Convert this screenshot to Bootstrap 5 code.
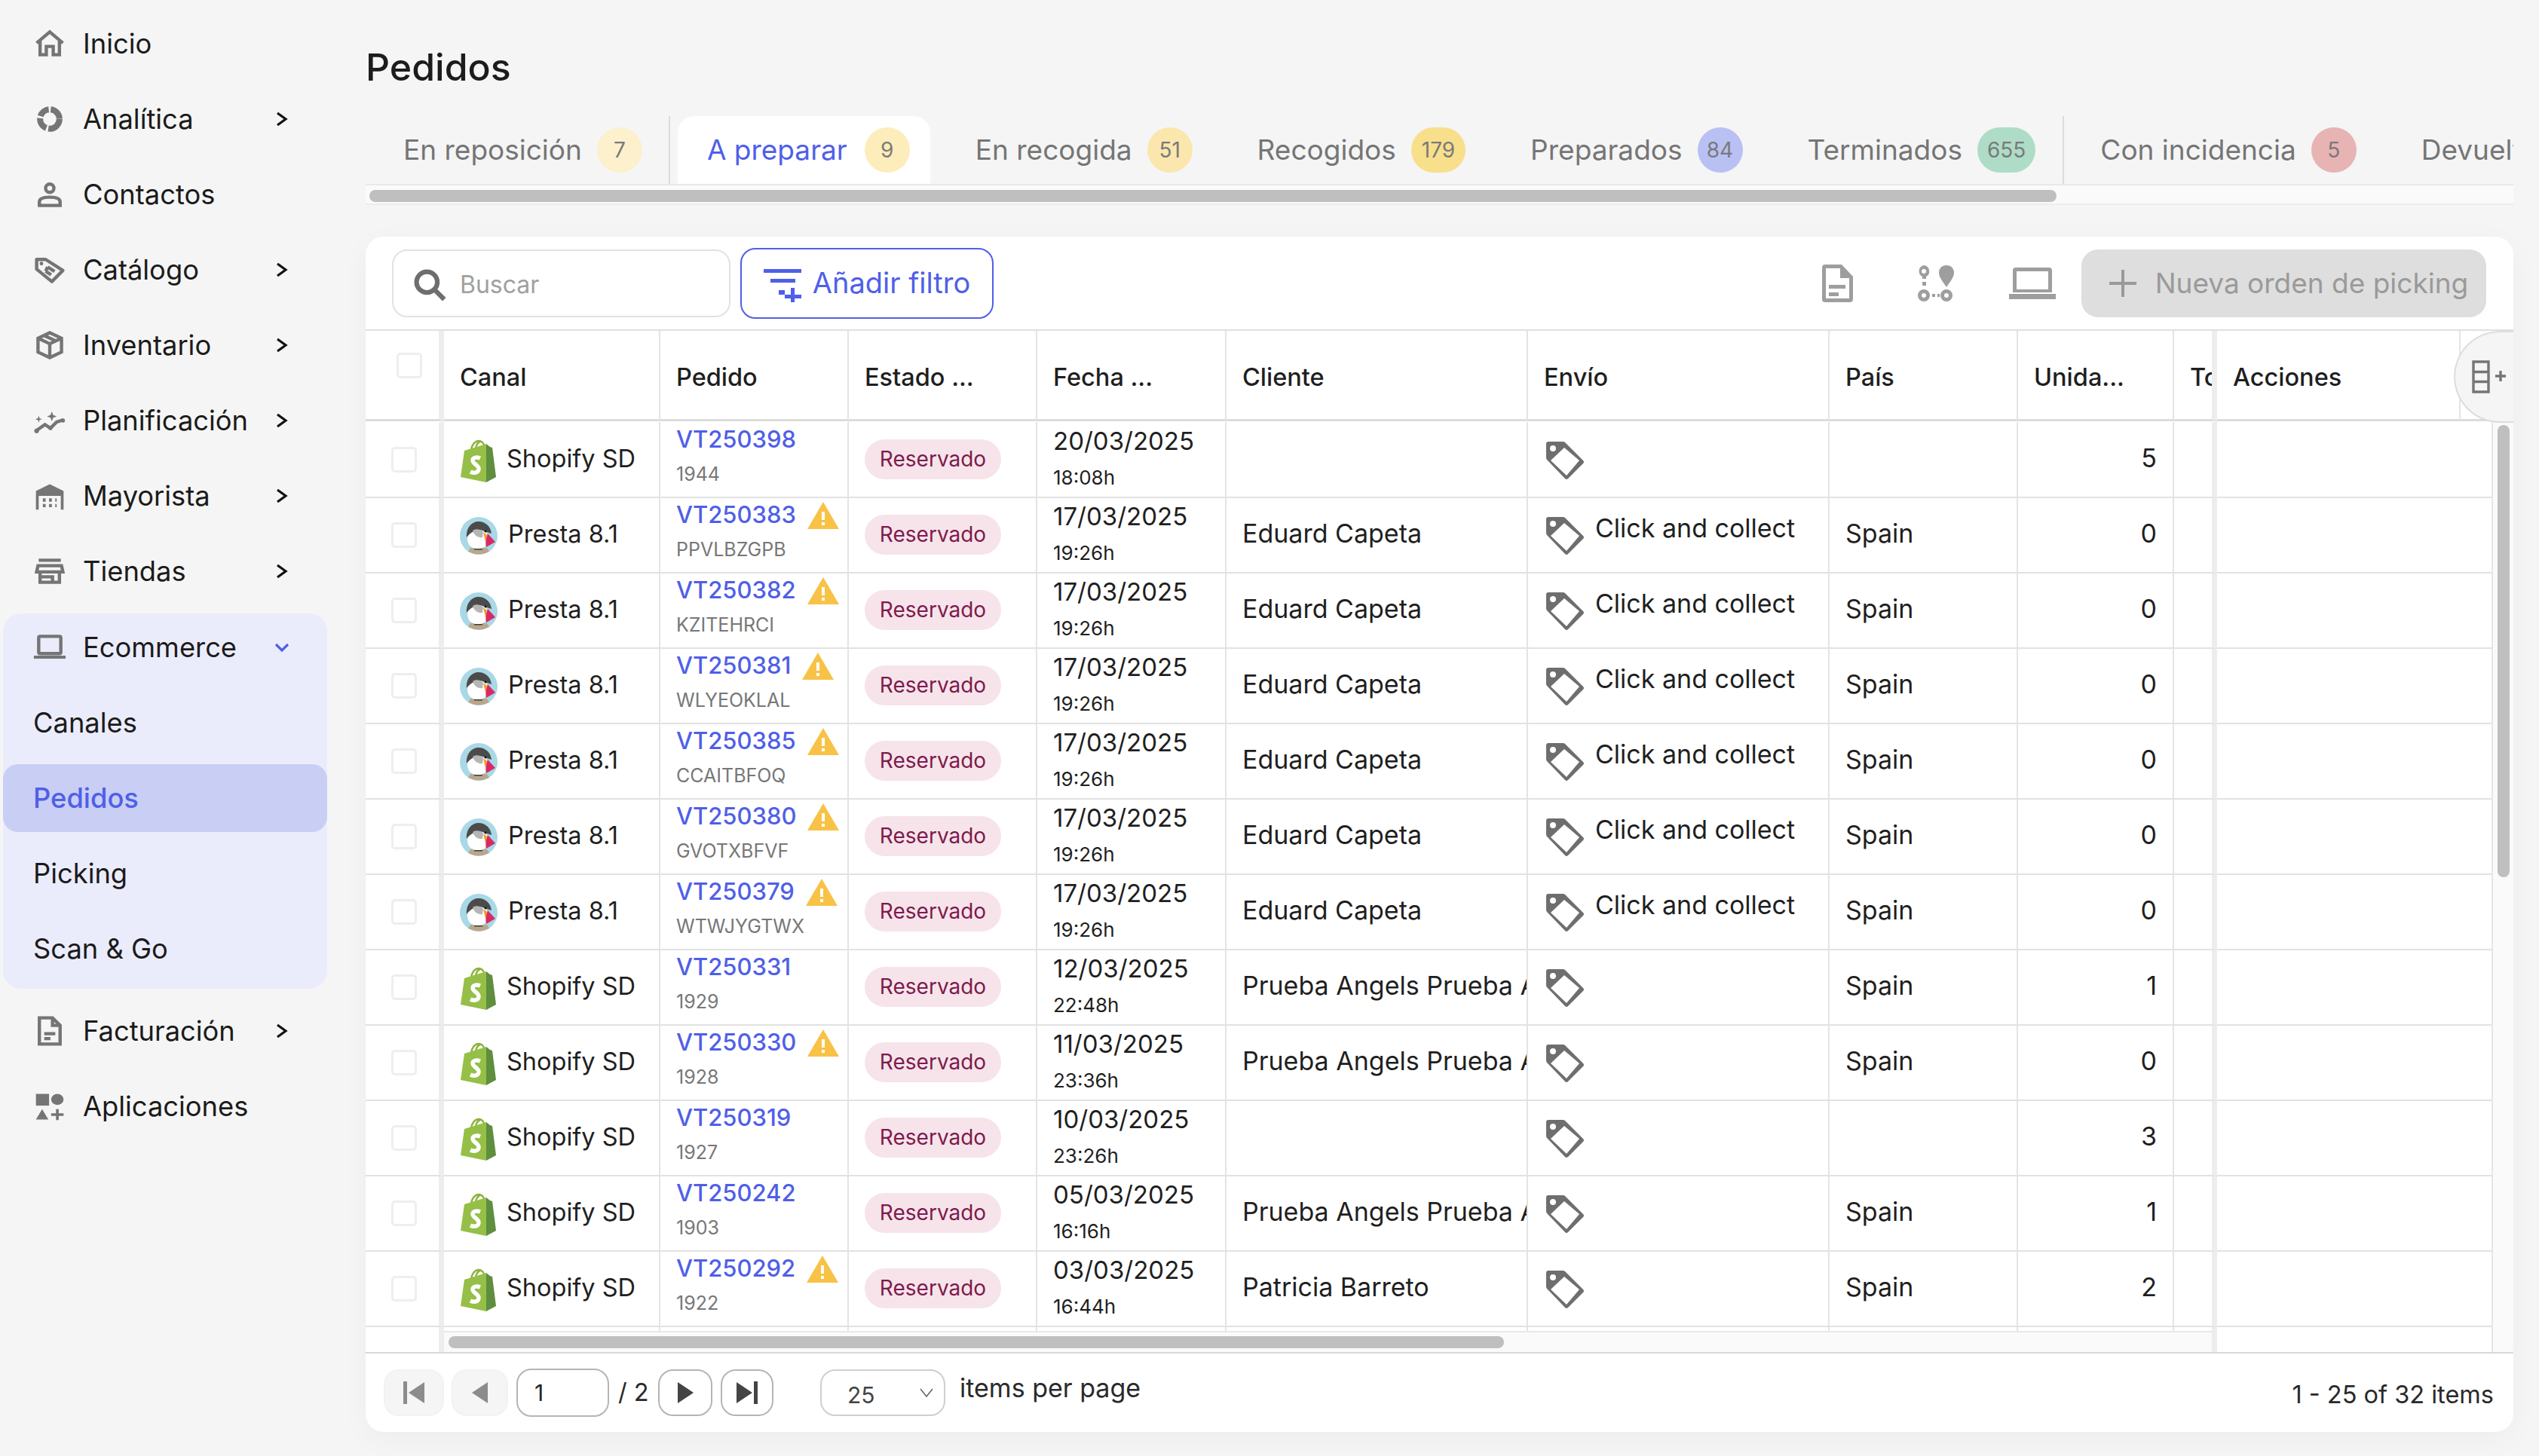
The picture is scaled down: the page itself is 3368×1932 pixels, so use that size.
<!DOCTYPE html>
<html lang="es">
<head>
<meta charset="utf-8">
<title>Pedidos</title>
<link href="https://cdn.jsdelivr.net/npm/bootstrap@5.3.0/dist/css/bootstrap.min.css" rel="stylesheet">
<style>
html,body{height:100%;}
body{background:#f5f5f5;font-family:Inter,"Liberation Sans",sans-serif;color:#1f1f1f;overflow:hidden;font-size:34px;}
.app-shell{height:1932px;}
.side-col{width:485px;flex:none;padding:13px 0 0 4px;}
.side-col .nav-row{width:430px;height:90px;padding-left:40px;margin-bottom:10px;font-size:36.3px;line-height:1;color:#1b1b1b;text-decoration:none;}
.nav-ico{width:44px;height:44px;flex:none;margin-right:22px;fill:none;stroke:#757575;stroke-width:2.4;}
.nav-ico .solid{fill:#757575;stroke:none;}
.nav-chev{width:16px;height:22px;margin-left:auto;margin-right:52px;fill:none;stroke:#111;stroke-width:3.2;}
.nav-group{width:430px;height:498px;margin:1px 0 11px;background:#ebecfb;border-radius:24px;}
.nav-group .nav-row{margin-bottom:10px;}
.nav-group .sub-row{padding-left:40px;}
.nav-group .chev-down{width:22px;height:16px;margin-right:49px;stroke:#4f5fe8;}
.nav-group .is-current{background:#c9cef5;color:#4f5fe8;border-radius:20px;font-weight:500;}
.main-col{min-width:0;padding-right:34px;}
.page-title{height:154px;margin:0;padding-top:61px;font-size:50px;line-height:56px;font-weight:500;color:#1c1c1c;}
.tab-strip{height:90px;gap:21px;padding-left:11px;overflow:hidden;}
.tab-item{height:90px;flex:none;padding:0 26px 0 39px;gap:20px;font-size:37px;color:#757575;border-radius:22px 22px 0 0;text-decoration:none;white-space:nowrap;}
.tab-item.is-active{background:#fff;color:#4f5fe8;gap:23px;padding-right:27px;}
.tab-split{width:2px;height:90px;flex:none;margin:0 -11.5px;background:#dcdcdc;}
.tab-count{min-width:60px;height:60px;padding:0 10px;border-radius:30px;font-size:28px;color:#7a7a7a;}
.count-a{background:#fcf0cd;}.count-b{background:#fdedbb;}.count-c{background:#fbe7ad;}.count-d{background:#f8df8b;padding:0 14px;}
.count-e{background:#b9c0f3;}.count-f{background:#aedcc6;padding:0 13px;}.count-g{background:#e8b3b3;}
.hbar-track{background:#fafafa;border-top:2px solid #e8e8e8;border-bottom:2px solid #ececec;}
.tabs-track{height:28px;padding:6px 0 0 5px;margin-bottom:42px;}
.hbar-thumb{height:16px;background:#bfbfbf;border-radius:8px;}
.tabs-thumb{width:2238px;}
.data-card{height:1586px;background:#fff;border:0;border-radius:24px;overflow:hidden;box-shadow:0 10px 40px rgba(0,0,0,.035);}
.tool-bar{height:125px;padding:0 36px 0 35px;border-bottom:2px solid #e0e0e0;}
.search-box{width:449px;height:90px;}
.search-box .form-control{height:90px;padding:3px 0 0 88px;border:2px solid #e2e2e2;border-radius:20px;font-size:32px;box-shadow:none;}
.search-box .form-control::placeholder{color:#a0a0a0;}
.search-ico{position:absolute;left:28px;top:25px;width:44px;height:44px;fill:none;stroke:#6e6e6e;stroke-width:3.4;}
.filter-btn{width:336px;height:94px;margin-left:13px;border:2px solid #4f5fe8;border-radius:20px;color:#4f5fe8;background:#fff;font-size:38px;gap:13px;padding:0;}
.filter-btn svg{width:52px;height:44px;margin-top:6px;fill:#4f5fe8;}
.tool-ico{fill:#9e9e9e;stroke:none;}
.tool-route{margin-left:84px;}
.tool-laptop{margin-left:72px;}
.new-btn,.new-btn:disabled{width:537px;height:90px;margin-left:34px;background:#dedede;border:0;border-radius:22px;color:#9a9a9a;font-size:37px;gap:24px;padding:0 0 0 12px;opacity:1;white-space:nowrap;}
.new-btn svg{width:38px;height:38px;stroke:#9a9a9a;stroke-width:4;}
.table-zone{height:1355px;overflow:hidden;}
.order-table{table-layout:fixed;width:2849px;margin:0;border-collapse:separate;border-spacing:0;--bs-table-bg:#fff;}
.order-table > * > tr > th,.order-table > * > tr > td{padding:0 0 0 21px;border-right:2px solid #e4e4e4;border-bottom:2px solid #e2e2e2;white-space:nowrap;overflow:hidden;vertical-align:top;color:#1f1f1f;box-shadow:none;}
.order-table > thead > tr > th{height:120px;font-size:32.5px;font-weight:500;vertical-align:middle;border-bottom:3px solid #dcdcdc;padding-top:8px;}
.order-table > tbody > tr > td{height:100px;font-size:34px;line-height:1;}
.order-table > tbody > tr:first-child > td{height:102px;border-top:2px solid #fff;}
.order-table > * > tr > .sel-col{padding-left:34px;border-right:7px solid #ededed;vertical-align:middle;}
.order-table > thead > tr > .sel-col{padding:0 0 26px 41px;}
.order-table > * > tr > .end-col{border-right:7px solid #ededed;}
.order-table > * > tr > .act-col{border-right:0;}
.order-table > tbody > tr > .blank-col{border-right:0;}
.order-table > * > tr > .num-col{text-align:right;padding-right:21px;padding-bottom:4px;vertical-align:middle;}
.order-table > tbody > tr > .mid-col{vertical-align:middle;padding-bottom:4px;}
.order-table > tbody > tr > .pill-col{vertical-align:middle;padding-bottom:2px;}
.pick-box.form-check-input{width:34px;height:34px;margin:0;float:none;display:block;border:3px solid #eeeeee;border-radius:5px;box-shadow:none;}
.chan-wrap{gap:14px;height:96px;font-size:32.5px;}
.chan-shop{width:48px;height:57px;flex:none;margin-top:4px;}
.chan-presta{width:50px;height:50px;flex:none;margin-top:4px;}
.ord-top{height:45px;gap:15px;line-height:43px;}
.ord-link{color:#4f5fe8;font-size:31px;font-weight:500;text-decoration:none;}
.ord-warn{width:42px;height:36px;flex:none;margin-top:5px;}
.ord-sub{height:47px;line-height:47px;font-size:25px;color:#777;}
.res-pill{display:inline-block;width:181px;height:53px;padding:0;line-height:53px;background:#f6e4ea;color:#7e1a4e;font-size:28px;font-weight:400;}
.date-top{height:49px;line-height:49px;font-size:33px;}
.time-sub{height:47px;line-height:47px;font-size:26px;}
.ship-wrap{height:98px;padding-left:3px;}
.ship-tag{width:51px;height:51px;flex:none;margin-top:25px;fill:#6e6e6e;}
.ship-text{margin:21px 0 0 14px;line-height:38px;}
.columns-btn{position:absolute;right:0;top:0;width:79px;height:122px;background:#f5f5f5;border:2px solid #dcdcdc;border-right:0;border-radius:61px 0 0 61px;padding:0 6px 0 22px;}
.columns-btn svg{width:46px;height:44px;display:block;fill:none;stroke:#757575;stroke-width:3.4;}
.vbar-track{position:absolute;right:0;top:122px;bottom:0;width:29px;padding:3px 0 0 6px;background:#fafafa;border-left:2px solid #e6e6e6;}
.vbar-thumb{width:16px;height:600px;background:#bfbfbf;border-radius:8px;}
.bottom-bar{position:absolute;left:104px;width:2345px;top:1327px;height:28px;padding:5px 0 0 6px;border-bottom:0;}
.bottom-thumb{width:1400px;}
.pager-bar{height:106px;padding:0 26px 0 24px;border-top:2px solid #d8d8d8;font-size:32.5px;color:#2a2a2a;}
.pg-btn{height:62px;padding:0;border:2px solid #b5b5b5;border-radius:20px;background:#fff;}
.pg-btn svg{width:36px;height:36px;fill:#444;}
.pg-btn.is-off{background:#f5f5f5;border-color:#f2f2f2;}
.pg-btn.is-off svg{fill:#8c8c8c;}
.pg-first{width:80px;}.pg-prev{width:75px;margin-left:10px;}.pg-next{width:72px;margin-left:11px;}.pg-last{width:70px;margin-left:11px;}
.pg-input{width:123px;height:64px;margin-left:11px;padding:0 0 0 22px;border:2px solid #b5b5b5;border-radius:20px;font-size:30px;box-shadow:none;}
.pg-total{width:42px;margin-left:12px;white-space:nowrap;}
.pg-size{width:166px;height:62px;margin-left:62px;padding:6px 0 0 34px;border:2px solid #cfcfcf;border-radius:20px;font-size:30px;color:#444;box-shadow:none;background-position:right 12px center;background-size:22px 16px;background-image:url("data:image/svg+xml,%3csvg xmlns='http://www.w3.org/2000/svg' viewBox='0 0 22 16'%3e%3cpath fill='none' stroke='%23666' stroke-width='1.6' d='M3 3l8 10 8-10'/%3e%3c/svg%3e");}
.pg-label{margin-left:19px;margin-top:-14px;white-space:nowrap;font-size:34px;}
.pg-range{margin-top:6px;white-space:nowrap;}
</style>
</head>
<body>
<svg width="0" height="0" class="position-absolute">
  <defs>
    <symbol id="i-shop" viewBox="0 0 48 57">
      <path fill="none" stroke="#8db33f" stroke-width="2.4" d="M15 14c1-7 5-12 10-12 5 0 8 5 8 10M21 11c1-4 3-7 6-8"/>
      <path fill="#95bf47" d="M1 50 6 15l29-9v51z"/>
      <path fill="#5e8e3e" d="M35 6l5 4 3 1 5 39-13 7z"/>
      <path fill="none" stroke="#fff" stroke-width="5.4" d="M27 25c-5-2-10-1-10 3 0 5 9 6 8 12-1 5-7 5-11 3"/>
    </symbol>
    <symbol id="i-presta" viewBox="0 0 50 50">
      <circle cx="25" cy="25" r="25" fill="#a9d8e6"/>
      <path fill="#b9a78c" d="M14 41h22l3 5q-14 7-28 0z"/>
      <path fill="#fff" d="M10 28C10 14 40 14 38 30c-2 11-10 13-17 12-7-1-11-6-11-14z"/>
      <path fill="#4b4b4b" d="M9 27C8 14 16 6 25 6c8 0 16 6 17 16l-9-3C26 15 16 18 9 27z"/>
      <path fill="#b5b5b5" d="M17 18c4-3 11-2 14 2l-1 7c-5 1-11-2-13-9z"/>
      <path fill="#f39c1f" d="M31 20l5 4-2 9z"/>
      <path fill="#d92b63" d="M37 22l10 11-12 7q-2-8 2-18z"/>
      <path fill="#3a3a3a" d="M19 42h11v1.500H19z"/>
      <circle cx="34" cy="19" r="1.400" fill="#111"/>
    </symbol>
    <symbol id="i-warn" viewBox="0 0 42 36">
      <path fill="#f8c246" d="M21 0 42 36H0z"/>
      <path fill="#fff" d="M19 13h4v11h-4zM19 27h4v4h-4z"/>
    </symbol>
    <symbol id="i-tag" viewBox="0 0 51 51">
      <path fill-rule="evenodd" d="M3 0h19q2 0 3 1l24 24q2 2 0 4L29 49q-2 2-4 0L1 24q-1-1-1-3V3q0-3 3-3zm21 8L6 25l21 20 17-20zM9 5a4 4 0 1 0 0 8 4 4 0 0 0 0-8z"/>
    </symbol>
    <symbol id="i-right" viewBox="0 0 16 22"><path d="M2 3l11 8-11 8"/></symbol>
  </defs>
</svg>

<div class="app-shell d-flex">
  <nav class="side-col d-flex flex-column">
    <a class="nav-row d-flex align-items-center" href="#"><svg class="nav-ico" viewBox="0 0 24 24"><path d="M2.500 11.500 12 3.500l9.500 8M5 9.500V20h4.500v-6h5v6H19V9.500"/></svg>Inicio</a>
    <a class="nav-row d-flex align-items-center" href="#"><svg class="nav-ico" viewBox="0 0 24 24"><circle cx="12" cy="12" r="7" stroke-width="4.400" stroke-dasharray="12 1.500 9 1.500 8 1.500 10 1.500"/></svg>Analítica<svg class="nav-chev"><use href="#i-right"/></svg></a>
    <a class="nav-row d-flex align-items-center" href="#"><svg class="nav-ico" viewBox="0 0 24 24"><circle cx="12" cy="7.500" r="3"/><path d="M4.500 20v-2.500c0-2.500 3.500-3.500 7.500-3.500s7.500 1 7.500 3.500V20z"/></svg>Contactos</a>
    <a class="nav-row d-flex align-items-center" href="#"><svg class="nav-ico" viewBox="0 0 24 24"><path d="M2.500 4.500h6.500l12.500 8-8 8-11-9z" stroke-linejoin="round"/><circle class="solid" cx="6" cy="7.500" r="1.300"/><path d="M10.500 10l5 3.200M9 13l4 2.600M10.500 10 9 13"/></svg>Catálogo<svg class="nav-chev"><use href="#i-right"/></svg></a>
    <a class="nav-row d-flex align-items-center" href="#"><svg class="nav-ico" viewBox="0 0 24 24"><path d="M12 3 3.500 7v10l8.500 4 8.500-4V7zM3.500 7l8.500 4 8.500-4M12 11v10M8 5l8.500 4"/></svg>Inventario<svg class="nav-chev"><use href="#i-right"/></svg></a>
    <a class="nav-row d-flex align-items-center" href="#"><svg class="nav-ico" viewBox="0 0 24 24"><path d="M2 19.500 8.500 15l4 2.500 4.500-4.500 5-1.500"/><circle class="solid" cx="2.500" cy="19.500" r="1.700"/><circle class="solid" cx="12.500" cy="17.500" r="1.500"/><circle class="solid" cx="21.500" cy="12" r="1.500"/><path class="solid" d="M13.500 5.500l1 2.500 2.500 1-2.500 1-1 2.500-1-2.500-2.500-1 2.500-1zM4 8.500l.6 1.900 1.900.6-1.900.6L4 13.500l-.6-1.900L1.500 11l1.900-.6z"/></svg>Planificación<svg class="nav-chev"><use href="#i-right"/></svg></a>
    <a class="nav-row d-flex align-items-center" href="#"><svg class="nav-ico" viewBox="0 0 24 24"><path class="solid" d="M2 22V8.500L12 3.500l10 5V22h-2V12H4v10zM5 9.500h14v1H5z"/><path d="M7 15h10M7 19h10" stroke-dasharray="2 2.500"/></svg>Mayorista<svg class="nav-chev"><use href="#i-right"/></svg></a>
    <a class="nav-row d-flex align-items-center" href="#"><svg class="nav-ico" viewBox="0 0 24 24"><path d="M4 4h16M3.500 8h17l1 4.500h-19zM5 12.500V20h14v-7.500M5 16h9v4"/></svg>Tiendas<svg class="nav-chev"><use href="#i-right"/></svg></a>
    <div class="nav-group">
      <a class="nav-row d-flex align-items-center" href="#"><svg class="nav-ico" viewBox="0 0 24 24"><rect x="4" y="4" width="16" height="12.500" rx="1"/><rect class="solid" x="0.500" y="18" width="23" height="2.200"/></svg>Ecommerce<svg class="nav-chev chev-down" viewBox="0 0 22 16"><path d="M3 4l8 8 8-8"/></svg></a>
      <a class="nav-row sub-row d-flex align-items-center" href="#">Canales</a>
      <a class="nav-row sub-row is-current d-flex align-items-center" href="#">Pedidos</a>
      <a class="nav-row sub-row d-flex align-items-center" href="#">Picking</a>
      <a class="nav-row sub-row d-flex align-items-center" href="#">Scan &amp; Go</a>
    </div>
    <a class="nav-row d-flex align-items-center" href="#"><svg class="nav-ico" viewBox="0 0 24 24"><path d="M4.500 2.500h9.500l5.500 5.500v13.500h-15zM14 2.500V8h5.500M8 14h8M8 17.500h4.500"/></svg>Facturación<svg class="nav-chev"><use href="#i-right"/></svg></a>
    <a class="nav-row d-flex align-items-center" href="#"><svg class="nav-ico" viewBox="0 0 24 24"><g class="solid"><rect x="2" y="3" width="9.500" height="8.500"/><ellipse cx="17.500" cy="7" rx="4.500" ry="4"/><path d="M6.500 14 11 21.500H2z"/><path d="M16.500 14h2v3h3.500v2h-3.500v3h-2v-3H13v-2h3.500z"/></g></svg>Aplicaciones</a>
  </nav>

  <main class="main-col flex-grow-1 d-flex flex-column">
    <h1 class="page-title">Pedidos</h1>
    <div class="tab-strip d-flex align-items-stretch">
      <a class="tab-item d-flex align-items-center" href="#">En reposición<span class="tab-count count-a d-flex align-items-center justify-content-center">7</span></a>
      <span class="tab-split"></span>
      <a class="tab-item is-active d-flex align-items-center" href="#">A preparar<span class="tab-count count-b d-flex align-items-center justify-content-center">9</span></a>
      <a class="tab-item d-flex align-items-center" href="#">En recogida<span class="tab-count count-c d-flex align-items-center justify-content-center">51</span></a>
      <a class="tab-item d-flex align-items-center" href="#">Recogidos<span class="tab-count count-d d-flex align-items-center justify-content-center">179</span></a>
      <a class="tab-item d-flex align-items-center" href="#">Preparados<span class="tab-count count-e d-flex align-items-center justify-content-center">84</span></a>
      <a class="tab-item d-flex align-items-center" href="#">Terminados<span class="tab-count count-f d-flex align-items-center justify-content-center">655</span></a>
      <span class="tab-split"></span>
      <a class="tab-item d-flex align-items-center" href="#">Con incidencia<span class="tab-count count-g d-flex align-items-center justify-content-center">5</span></a>
      <a class="tab-item d-flex align-items-center" href="#">Devueltos</a>
    </div>
    <div class="hbar-track tabs-track"><div class="hbar-thumb tabs-thumb"></div></div>

    <section class="card data-card">
      <div class="tool-bar d-flex align-items-center">
        <div class="search-box position-relative">
          <svg class="search-ico" viewBox="0 0 24 24"><circle cx="10" cy="10" r="7.500"/><path d="M15.500 15.500 22.500 22.500"/></svg>
          <input class="form-control" type="text" placeholder="Buscar">
        </div>
        <button class="btn filter-btn d-flex align-items-center justify-content-center" type="button">
          <svg viewBox="0 0 52 44"><path d="M0 0h50v5H0zM9 13h33v5H9zM20 28h8v6h-8zM36 25h5v9h9v5h-9v5h-5v-5h-8v-5h8z"/></svg>Añadir filtro
        </button>
        <div class="ms-auto d-flex align-items-center">
          <svg class="tool-ico" width="42" height="52" viewBox="0 0 42 52"><path fill-rule="evenodd" d="M4 1h22l15 16v30a4 4 0 0 1-4 4H4a4 4 0 0 1-4-4V5a4 4 0 0 1 4-4zm1 5v40h31V19H24V6zM9 28h22v5H9zM9 38h13v5H9z"/></svg>
          <svg class="tool-ico tool-route" width="50" height="50" viewBox="0 0 50 50"><path fill-rule="evenodd" d="M9 1a8 8 0 0 1 3 15v3H7v-3A8 8 0 0 1 9 1zm0 5a3 3 0 1 0 0 6 3 3 0 0 0 0-6zM39 1c6 0 10 4 10 10 0 6-6 13-10 19-4-6-10-13-10-19C29 5 33 1 39 1zM7 23h5v5H7zM9 33a8 8 0 1 1 0 16 8 8 0 0 1 0-16zm0 5a3 3 0 1 0 0 6 3 3 0 0 0 0-6zM39 33a8 8 0 1 1 0 16 8 8 0 0 1 0-16zm0 5a3 3 0 1 0 0 6 3 3 0 0 0 0-6zM20 39h4v4h-4zM27 39h3v4h-3z"/></svg>
          <svg class="tool-ico tool-laptop" width="62" height="42" viewBox="0 0 62 42"><path fill-rule="evenodd" d="M9 0h44a4 4 0 0 1 4 4v29H5V4a4 4 0 0 1 4-4zm1 5v24h42V5zM0 35h62v7H0z"/></svg>
          <button class="btn new-btn d-flex align-items-center justify-content-center" type="button" disabled>
            <svg viewBox="0 0 38 38"><path d="M19 1v36M1 19h36"/></svg>Nueva orden de picking
          </button>
        </div>
      </div>

      <div class="table-zone position-relative">
        <table class="table order-table">
          <colgroup><col style="width:104px"><col style="width:287px"><col style="width:250px"><col style="width:250px"><col style="width:251px"><col style="width:400px"><col style="width:400px"><col style="width:250px"><col style="width:207px"><col style="width:57px"><col style="width:323px"><col style="width:70px"></colgroup>
          <thead>
            <tr>
              <th class="sel-col"><input class="form-check-input pick-box" type="checkbox"></th>
              <th>Canal</th><th>Pedido</th><th>Estado ...</th><th>Fecha ...</th><th>Cliente</th><th>Envío</th><th>País</th><th>Unida...</th><th class="end-col">Total</th><th>Acciones</th><th class="act-col"></th>
            </tr>
          </thead>
          <tbody>
            <tr><td class="sel-col"><input class="form-check-input pick-box" type="checkbox"></td><td><div class="chan-wrap d-flex align-items-center"><svg class="chan-shop"><use href="#i-shop"/></svg>Shopify SD</div></td><td><div class="ord-top d-flex"><a class="ord-link" href="#">VT250398</a></div><div class="ord-sub">1944</div></td><td class="pill-col"><span class="badge rounded-pill res-pill">Reservado</span></td><td><div class="date-top">20/03/2025</div><div class="time-sub">18:08h</div></td><td class="mid-col"></td><td><div class="ship-wrap d-flex"><svg class="ship-tag"><use href="#i-tag"/></svg></div></td><td class="mid-col"></td><td class="num-col">5</td><td class="end-col"></td><td class="blank-col"></td><td class="act-col"></td></tr>
            <tr><td class="sel-col"><input class="form-check-input pick-box" type="checkbox"></td><td><div class="chan-wrap d-flex align-items-center"><svg class="chan-presta"><use href="#i-presta"/></svg>Presta 8.1</div></td><td><div class="ord-top d-flex"><a class="ord-link" href="#">VT250383</a><svg class="ord-warn"><use href="#i-warn"/></svg></div><div class="ord-sub">PPVLBZGPB</div></td><td class="pill-col"><span class="badge rounded-pill res-pill">Reservado</span></td><td><div class="date-top">17/03/2025</div><div class="time-sub">19:26h</div></td><td class="mid-col">Eduard Capeta</td><td><div class="ship-wrap d-flex"><svg class="ship-tag"><use href="#i-tag"/></svg><span class="ship-text">Click and collect</span></div></td><td class="mid-col">Spain</td><td class="num-col">0</td><td class="end-col"></td><td class="blank-col"></td><td class="act-col"></td></tr>
            <tr><td class="sel-col"><input class="form-check-input pick-box" type="checkbox"></td><td><div class="chan-wrap d-flex align-items-center"><svg class="chan-presta"><use href="#i-presta"/></svg>Presta 8.1</div></td><td><div class="ord-top d-flex"><a class="ord-link" href="#">VT250382</a><svg class="ord-warn"><use href="#i-warn"/></svg></div><div class="ord-sub">KZITEHRCI</div></td><td class="pill-col"><span class="badge rounded-pill res-pill">Reservado</span></td><td><div class="date-top">17/03/2025</div><div class="time-sub">19:26h</div></td><td class="mid-col">Eduard Capeta</td><td><div class="ship-wrap d-flex"><svg class="ship-tag"><use href="#i-tag"/></svg><span class="ship-text">Click and collect</span></div></td><td class="mid-col">Spain</td><td class="num-col">0</td><td class="end-col"></td><td class="blank-col"></td><td class="act-col"></td></tr>
            <tr><td class="sel-col"><input class="form-check-input pick-box" type="checkbox"></td><td><div class="chan-wrap d-flex align-items-center"><svg class="chan-presta"><use href="#i-presta"/></svg>Presta 8.1</div></td><td><div class="ord-top d-flex"><a class="ord-link" href="#">VT250381</a><svg class="ord-warn"><use href="#i-warn"/></svg></div><div class="ord-sub">WLYEOKLAL</div></td><td class="pill-col"><span class="badge rounded-pill res-pill">Reservado</span></td><td><div class="date-top">17/03/2025</div><div class="time-sub">19:26h</div></td><td class="mid-col">Eduard Capeta</td><td><div class="ship-wrap d-flex"><svg class="ship-tag"><use href="#i-tag"/></svg><span class="ship-text">Click and collect</span></div></td><td class="mid-col">Spain</td><td class="num-col">0</td><td class="end-col"></td><td class="blank-col"></td><td class="act-col"></td></tr>
            <tr><td class="sel-col"><input class="form-check-input pick-box" type="checkbox"></td><td><div class="chan-wrap d-flex align-items-center"><svg class="chan-presta"><use href="#i-presta"/></svg>Presta 8.1</div></td><td><div class="ord-top d-flex"><a class="ord-link" href="#">VT250385</a><svg class="ord-warn"><use href="#i-warn"/></svg></div><div class="ord-sub">CCAITBFOQ</div></td><td class="pill-col"><span class="badge rounded-pill res-pill">Reservado</span></td><td><div class="date-top">17/03/2025</div><div class="time-sub">19:26h</div></td><td class="mid-col">Eduard Capeta</td><td><div class="ship-wrap d-flex"><svg class="ship-tag"><use href="#i-tag"/></svg><span class="ship-text">Click and collect</span></div></td><td class="mid-col">Spain</td><td class="num-col">0</td><td class="end-col"></td><td class="blank-col"></td><td class="act-col"></td></tr>
            <tr><td class="sel-col"><input class="form-check-input pick-box" type="checkbox"></td><td><div class="chan-wrap d-flex align-items-center"><svg class="chan-presta"><use href="#i-presta"/></svg>Presta 8.1</div></td><td><div class="ord-top d-flex"><a class="ord-link" href="#">VT250380</a><svg class="ord-warn"><use href="#i-warn"/></svg></div><div class="ord-sub">GVOTXBFVF</div></td><td class="pill-col"><span class="badge rounded-pill res-pill">Reservado</span></td><td><div class="date-top">17/03/2025</div><div class="time-sub">19:26h</div></td><td class="mid-col">Eduard Capeta</td><td><div class="ship-wrap d-flex"><svg class="ship-tag"><use href="#i-tag"/></svg><span class="ship-text">Click and collect</span></div></td><td class="mid-col">Spain</td><td class="num-col">0</td><td class="end-col"></td><td class="blank-col"></td><td class="act-col"></td></tr>
            <tr><td class="sel-col"><input class="form-check-input pick-box" type="checkbox"></td><td><div class="chan-wrap d-flex align-items-center"><svg class="chan-presta"><use href="#i-presta"/></svg>Presta 8.1</div></td><td><div class="ord-top d-flex"><a class="ord-link" href="#">VT250379</a><svg class="ord-warn"><use href="#i-warn"/></svg></div><div class="ord-sub">WTWJYGTWX</div></td><td class="pill-col"><span class="badge rounded-pill res-pill">Reservado</span></td><td><div class="date-top">17/03/2025</div><div class="time-sub">19:26h</div></td><td class="mid-col">Eduard Capeta</td><td><div class="ship-wrap d-flex"><svg class="ship-tag"><use href="#i-tag"/></svg><span class="ship-text">Click and collect</span></div></td><td class="mid-col">Spain</td><td class="num-col">0</td><td class="end-col"></td><td class="blank-col"></td><td class="act-col"></td></tr>
            <tr><td class="sel-col"><input class="form-check-input pick-box" type="checkbox"></td><td><div class="chan-wrap d-flex align-items-center"><svg class="chan-shop"><use href="#i-shop"/></svg>Shopify SD</div></td><td><div class="ord-top d-flex"><a class="ord-link" href="#">VT250331</a></div><div class="ord-sub">1929</div></td><td class="pill-col"><span class="badge rounded-pill res-pill">Reservado</span></td><td><div class="date-top">12/03/2025</div><div class="time-sub">22:48h</div></td><td class="mid-col">Prueba Angels Prueba Angels</td><td><div class="ship-wrap d-flex"><svg class="ship-tag"><use href="#i-tag"/></svg></div></td><td class="mid-col">Spain</td><td class="num-col">1</td><td class="end-col"></td><td class="blank-col"></td><td class="act-col"></td></tr>
            <tr><td class="sel-col"><input class="form-check-input pick-box" type="checkbox"></td><td><div class="chan-wrap d-flex align-items-center"><svg class="chan-shop"><use href="#i-shop"/></svg>Shopify SD</div></td><td><div class="ord-top d-flex"><a class="ord-link" href="#">VT250330</a><svg class="ord-warn"><use href="#i-warn"/></svg></div><div class="ord-sub">1928</div></td><td class="pill-col"><span class="badge rounded-pill res-pill">Reservado</span></td><td><div class="date-top">11/03/2025</div><div class="time-sub">23:36h</div></td><td class="mid-col">Prueba Angels Prueba Angels</td><td><div class="ship-wrap d-flex"><svg class="ship-tag"><use href="#i-tag"/></svg></div></td><td class="mid-col">Spain</td><td class="num-col">0</td><td class="end-col"></td><td class="blank-col"></td><td class="act-col"></td></tr>
            <tr><td class="sel-col"><input class="form-check-input pick-box" type="checkbox"></td><td><div class="chan-wrap d-flex align-items-center"><svg class="chan-shop"><use href="#i-shop"/></svg>Shopify SD</div></td><td><div class="ord-top d-flex"><a class="ord-link" href="#">VT250319</a></div><div class="ord-sub">1927</div></td><td class="pill-col"><span class="badge rounded-pill res-pill">Reservado</span></td><td><div class="date-top">10/03/2025</div><div class="time-sub">23:26h</div></td><td class="mid-col"></td><td><div class="ship-wrap d-flex"><svg class="ship-tag"><use href="#i-tag"/></svg></div></td><td class="mid-col"></td><td class="num-col">3</td><td class="end-col"></td><td class="blank-col"></td><td class="act-col"></td></tr>
            <tr><td class="sel-col"><input class="form-check-input pick-box" type="checkbox"></td><td><div class="chan-wrap d-flex align-items-center"><svg class="chan-shop"><use href="#i-shop"/></svg>Shopify SD</div></td><td><div class="ord-top d-flex"><a class="ord-link" href="#">VT250242</a></div><div class="ord-sub">1903</div></td><td class="pill-col"><span class="badge rounded-pill res-pill">Reservado</span></td><td><div class="date-top">05/03/2025</div><div class="time-sub">16:16h</div></td><td class="mid-col">Prueba Angels Prueba Angels</td><td><div class="ship-wrap d-flex"><svg class="ship-tag"><use href="#i-tag"/></svg></div></td><td class="mid-col">Spain</td><td class="num-col">1</td><td class="end-col"></td><td class="blank-col"></td><td class="act-col"></td></tr>
            <tr><td class="sel-col"><input class="form-check-input pick-box" type="checkbox"></td><td><div class="chan-wrap d-flex align-items-center"><svg class="chan-shop"><use href="#i-shop"/></svg>Shopify SD</div></td><td><div class="ord-top d-flex"><a class="ord-link" href="#">VT250292</a><svg class="ord-warn"><use href="#i-warn"/></svg></div><div class="ord-sub">1922</div></td><td class="pill-col"><span class="badge rounded-pill res-pill">Reservado</span></td><td><div class="date-top">03/03/2025</div><div class="time-sub">16:44h</div></td><td class="mid-col">Patricia Barreto</td><td><div class="ship-wrap d-flex"><svg class="ship-tag"><use href="#i-tag"/></svg></div></td><td class="mid-col">Spain</td><td class="num-col">2</td><td class="end-col"></td><td class="blank-col"></td><td class="act-col"></td></tr>
            <tr><td class="sel-col"></td><td></td><td></td><td></td><td></td><td></td><td></td><td></td><td></td><td class="end-col"></td><td class="blank-col"></td><td class="act-col"></td></tr>
          </tbody>
        </table>
        <button class="btn columns-btn" type="button" aria-label="Columnas"><svg viewBox="0 0 46 44"><path d="M2 2h20v40H2zM2 15.500h20M2 28.500h20M31 21h14M38 14v14"/></svg></button>
        <div class="vbar-track"><div class="vbar-thumb"></div></div>
        <div class="hbar-track bottom-bar"><div class="hbar-thumb bottom-thumb"></div></div>
      </div>

      <div class="pager-bar d-flex align-items-center">
        <button class="btn pg-btn pg-first is-off" type="button" aria-label="Primera"><svg viewBox="0 0 36 36"><path d="M4 3h5v30H4zM32 4v28L11 18z"/></svg></button>
        <button class="btn pg-btn pg-prev is-off" type="button" aria-label="Anterior"><svg viewBox="0 0 36 36"><path d="M28 4v28L7 18z"/></svg></button>
        <input class="form-control pg-input" type="text" value="1">
        <span class="pg-total">/ 2</span>
        <button class="btn pg-btn pg-next" type="button" aria-label="Siguiente"><svg viewBox="0 0 36 36"><path d="M8 4v28l21-14z"/></svg></button>
        <button class="btn pg-btn pg-last" type="button" aria-label="Última"><svg viewBox="0 0 36 36"><path d="M4 4v28l21-14zM27 3h5v30h-5z"/></svg></button>
        <select class="form-select pg-size"><option>25</option></select>
        <span class="pg-label">items per page</span>
        <span class="pg-range ms-auto">1 - 25 of 32 items</span>
      </div>
    </section>
  </main>
</div>
<script src="https://cdn.jsdelivr.net/npm/bootstrap@5.3.0/dist/js/bootstrap.bundle.min.js"></script>
</body>
</html>
